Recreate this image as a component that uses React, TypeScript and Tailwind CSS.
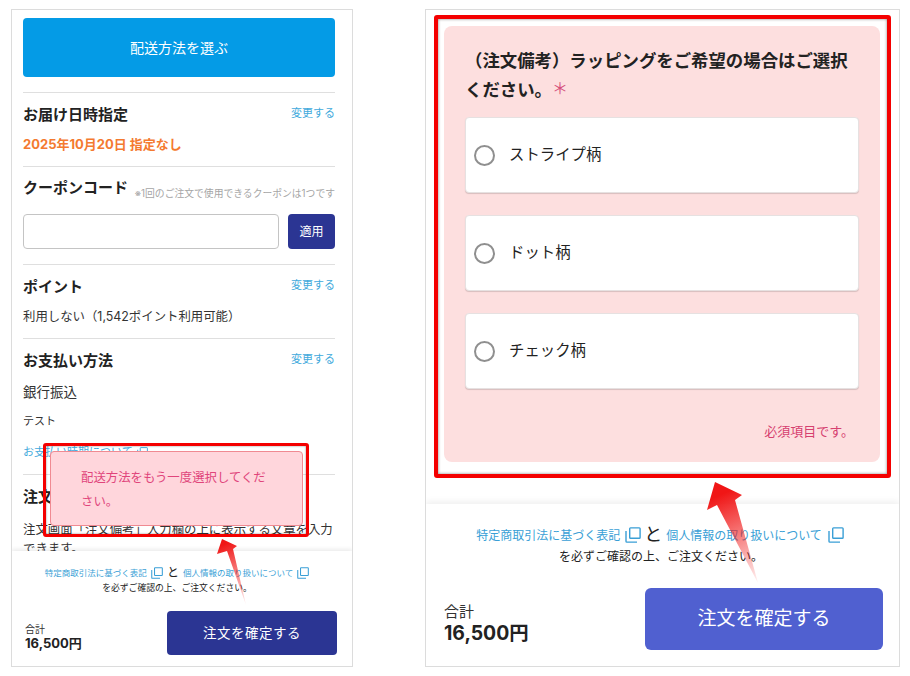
const CopyIcon = ({ className }: { className: string }) => (
    <svg viewBox="0 0 16 16" fill="none" stroke="currentColor" strokeWidth="1.4" className={className}>
        <rect x="4.7" y="0.9" width="10.4" height="10.4" rx="0.8" />
        <path d="M1 4v10.2c0 .5.4.9.9.9H12" />
    </svg>
)

const ChangeLink = () => <span className="text-[11px] leading-4 text-[#3fa9dc] -mt-1">変更する</span>

const Radio = ({ label }: { label: string }) => (
    <div className="h-[76px] flex items-center gap-[14px] pl-2 bg-white rounded border border-[#e6e1e1] shadow-[0_1px_1px_rgba(0,0,0,0.15)]">
        <span className="w-[21px] h-[21px] rounded-full border-2 border-[#8f8f8f] bg-white" />
        <span className="text-[15.4px] text-[#222]">{label}</span>
    </div>
)

const LeftPanel = () => (
    <div className="w-[342px] h-[658px] shrink-0 flex flex-col border border-[#dcdcdc] bg-white overflow-hidden">
        <div className="flex-1 overflow-hidden pl-[11px] pr-[17px] pt-2 min-h-0">
            <div className="h-[59px] rounded bg-[#049be6] flex items-center justify-center text-white text-sm">配送方法を選ぶ</div>
            <div className="mt-[15px] border-t border-[#dfdfdf] pt-3 pb-3">
                <div className="flex justify-between items-center h-5">
                    <span className="text-[15px] font-bold text-[#222]">お届け日時指定</span>
                    <ChangeLink />
                </div>
                <div className="mt-[9px] leading-5 text-[13px] font-bold text-[#f47a30]">2025年10月20日 指定なし</div>
            </div>
            <div className="border-t border-[#dfdfdf] pt-[14px] pb-[15px]">
                <div className="flex justify-between items-end h-[18px]">
                    <span className="text-[15px] font-bold text-[#222]">クーポンコード</span>
                    <span className="text-[9.8px] leading-4 text-[#a5a5a5] -mb-[3px]">※1回のご注文で使用できるクーポンは1つです</span>
                </div>
                <div className="mt-[15px] flex gap-[9px] h-[35px]">
                    <div className="flex-1 rounded border border-[#c4c4c4] bg-white" />
                    <div className="w-[47px] rounded bg-[#2b3593] text-white text-xs flex items-center justify-center">適用</div>
                </div>
            </div>
            <div className="border-t border-[#dfdfdf] pt-3 pb-3">
                <div className="flex justify-between items-center h-5">
                    <span className="text-[15px] font-bold text-[#222]">ポイント</span>
                    <ChangeLink />
                </div>
                <div className="mt-[10px] -mb-px leading-5 text-[12.4px] text-[#333]">利用しない（1,542ポイント利用可能）</div>
            </div>
            <div className="border-t border-[#dfdfdf] pt-3 pb-3">
                <div className="flex justify-between items-center h-5">
                    <span className="text-[15px] font-bold text-[#222]">お支払い方法</span>
                    <ChangeLink />
                </div>
                <div className="mt-[11px] leading-5 text-[13.5px] text-[#333]">銀行振込</div>
                <div className="mt-[9px] leading-5 text-[11px] text-[#333]">テスト</div>
                <div className="mt-[11px] h-5 flex items-center gap-1 text-[11px] text-[#3fa9dc]">
                    お支払い時期について
                    <CopyIcon className="w-[11px] h-[11px]" />
                </div>
            </div>
            <div className="border-t border-[#dfdfdf] pt-3">
                <div className="text-[15px] leading-5 font-bold text-[#222]">注文備考</div>
                <div className="mt-[13px] text-[12.4px] leading-[19px] text-[#333]">注文画面「注文備考」入力欄の上に表示する文章を入力できます。</div>
            </div>
        </div>
        <div className="h-[115px] shrink-0 bg-white shadow-[0_-2px_4px_rgba(0,0,0,0.08)] flex flex-col relative">
            <div className="mt-[13px] h-[18px] pr-[10px] flex items-center justify-center text-[8.5px] text-[#3a9fd6]">
                <span>特定商取引法に基づく表記</span>
                <CopyIcon className="w-3 h-3 ml-1" />
                <span className="mx-[4px] text-xs text-[#222]">と</span>
                <span>個人情報の取り扱いについて</span>
                <CopyIcon className="w-3 h-3 ml-1" />
            </div>
            <div className="pr-[10px] text-center text-[8.8px] leading-3 text-[#222]">を必ずご確認の上、ご注文ください。</div>
            <div className="mt-[17px] flex justify-between items-center pl-[13px] pr-[15px]">
                <div className="pt-[8px]">
                    <div className="text-[10px] leading-3 text-[#333]">合計</div>
                    <div className="text-[13px] leading-4 font-bold text-[#222]">16,500円</div>
                </div>
                <div className="w-[170px] h-[44px] rounded bg-[#2b3593] text-white text-[13.5px] tracking-[0.5px] flex items-center justify-center">注文を確定する</div>
            </div>
        </div>
    </div>
)

const RightPanel = () => (
    <div className="w-[475px] h-[658px] shrink-0 flex flex-col border border-[#dcdcdc] bg-white overflow-hidden">
        <div className="flex-1 min-h-0 pl-[18px] pr-[19px] pt-4">
            <div className="h-[436px] rounded-lg bg-[#fddfdf] px-[21px] pt-5">
                <div className="h-[58px] text-[17.4px] leading-[29px] font-bold text-[#222] whitespace-nowrap">
                    （注文備考）ラッピングをご希望の場合はご選択<br />
                    ください。<span className="font-normal text-[#d6507c] text-base align-[2px]">＊</span>
                </div>
                <div className="mt-[13px] flex flex-col gap-[22px]">
                    <Radio label="ストライプ柄" />
                    <Radio label="ドット柄" />
                    <Radio label="チェック柄" />
                </div>
                <div className="mt-[32px] pr-[5px] text-right text-[13px] leading-5 text-[#d6406f]">必須項目です。</div>
            </div>
        </div>
        <div className="h-[162px] shrink-0 bg-white shadow-[0_-3px_6px_rgba(0,0,0,0.06)] flex flex-col">
            <div className="mt-5 h-6 pr-[5px] flex items-center justify-center text-xs text-[#3a9fd6]">
                <span>特定商取引法に基づく表記</span>
                <CopyIcon className="w-4 h-4 ml-[5px] -mt-[3px]" />
                <span className="ml-[3px] mr-1 text-lg text-[#222] -mt-[3px]">と</span>
                <span>個人情報の取り扱いについて</span>
                <CopyIcon className="w-4 h-4 ml-[6px] -mt-[3px]" />
            </div>
            <div className="mt-[1px] pr-[3px] text-center text-xs leading-4 text-[#222]">を必ずご確認の上、ご注文ください。</div>
            <div className="mt-[23px] flex justify-between items-center pl-[18px] pr-[16px]">
                <div className="pt-2">
                    <div className="text-[15px] leading-5 text-[#333]">合計</div>
                    <div className="text-[19.4px] leading-[22px] font-bold text-[#222]">16,500円</div>
                </div>
                <div className="w-[238px] h-[62px] rounded-md bg-[#5060d0] text-white text-[19px] flex items-center justify-center">注文を確定する</div>
            </div>
        </div>
    </div>
)

export default function App() {
    return (
        <div className="relative w-[910px] h-[676px] bg-white overflow-hidden font-['Inter','Noto_Sans_CJK_JP',sans-serif]">
            <div className="flex gap-[72px] pl-[11px] pt-[9px]">
                <LeftPanel />
                <RightPanel />
            </div>

            {/* callout on the left shot */}
            <div className="absolute left-[43px] top-[443px] w-[266px] h-[94px] rounded-[3px] border-[3px] border-[#f40000] shadow-[inset_0_0_2px_rgba(0,0,0,0.5)]">
                <div className="absolute left-[4px] top-[5px] w-[253px] h-[75px] rounded bg-[#ffd6dc] border border-[#f08a92] pl-[30px] pr-[30px] pt-[14px] text-[12.4px] leading-6 text-[#e0457b]">
                    配送方法をもう一度選択してください。
                </div>
            </div>

            {/* callout on the right shot */}
            <div className="absolute left-[434px] top-[15px] w-[457px] h-[463px] rounded-[3px] border-[4px] border-[#f40000] shadow-[inset_0_0_3px_rgba(0,0,0,0.5)]" />

            <svg className="absolute left-0 top-0 pointer-events-none" width="910" height="676" viewBox="0 0 910 676">
                <defs>
                    <linearGradient id="arrowLeft" gradientUnits="userSpaceOnUse" x1="222" y1="545" x2="246" y2="605">
                        <stop offset="0" stopColor="#f01616" />
                        <stop offset="1" stopColor="#f01616" stopOpacity="0.05" />
                    </linearGradient>
                    <linearGradient id="arrowRight" gradientUnits="userSpaceOnUse" x1="720" y1="495" x2="758" y2="583">
                        <stop offset="0" stopColor="#f01616" />
                        <stop offset="1" stopColor="#f01616" stopOpacity="0.05" />
                    </linearGradient>
                </defs>
                <polygon points="222,539 237,546 233,549 246,605 227,551 217,554" fill="url(#arrowLeft)" />
                <polygon points="715,482 742,495 735,500 758,583 717,505 707,510" fill="url(#arrowRight)" />
            </svg>
        </div>
    )
}
